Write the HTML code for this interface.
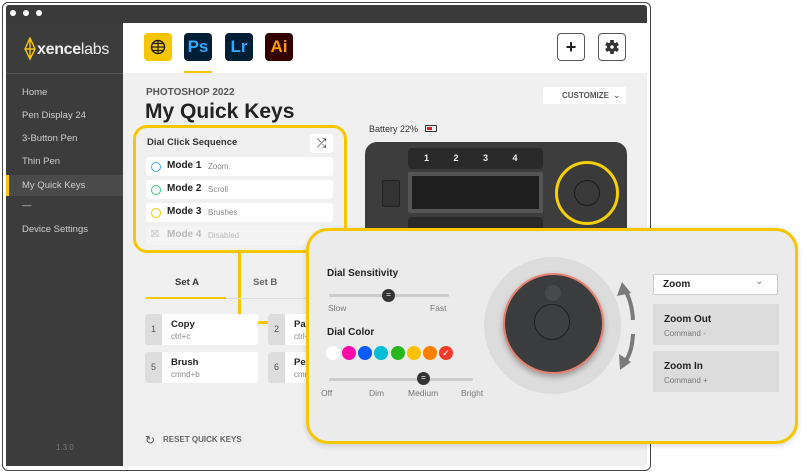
<!DOCTYPE html>
<html><head><meta charset="utf-8"><style>
*{margin:0;padding:0;box-sizing:border-box}
body{width:811px;height:474px;background:#fff;font-family:"Liberation Sans","DejaVu Sans",sans-serif;position:relative;overflow:hidden;color:#222}
.a{position:absolute}
.win{left:2px;top:2px;width:649px;height:469px;border:1px solid #444;border-radius:6px;background:#fff}
.t{position:absolute;white-space:nowrap}
.nav{left:22px;font-size:9.5px;color:#cfcfcf}
.ic{width:28px;height:28px;border-radius:4px;font-size:17px;font-weight:bold;text-align:center;line-height:28px}
.row{left:146px;width:187px;height:19px;background:#fff;border-radius:3px}
.row .c{position:absolute;left:5px;top:5px;width:10px;height:10px;border-radius:50%;border:1.5px solid}
.row b{position:absolute;left:21px;top:3px;font-size:10px}
.row span{position:absolute;left:62px;top:5px;font-size:8px;color:#888}
.key{width:113px;height:31px;background:#fff;border-radius:3px;overflow:hidden}
.key .n{position:absolute;left:0;top:0;width:17px;height:31px;background:#ddd;font-size:9px;color:#555;text-align:center;line-height:31px}
.key b{position:absolute;left:26px;top:5px;font-size:9.5px}
.key span{position:absolute;left:26px;top:18px;font-size:8px;color:#888}
.sw{width:14px;height:14px;border-radius:50%;top:346px}
</style></head><body>
<div class="a win"></div>
<div class="a" style="left:6px;top:5px;width:641px;height:18px;background:#3a3a3a;border-radius:3px 3px 0 0"></div>
<div class="a" style="left:10px;top:10px;width:6px;height:6px;border-radius:50%;background:#fff"></div>
<div class="a" style="left:23px;top:10px;width:6px;height:6px;border-radius:50%;background:#fff"></div>
<div class="a" style="left:36px;top:10px;width:6px;height:6px;border-radius:50%;background:#fff"></div>
<!-- sidebar -->
<div class="a" style="left:6px;top:23px;width:117px;height:443px;background:#3c3c3c"></div>
<div class="a" style="left:6px;top:73px;width:117px;height:1px;background:#555"></div>
<svg class="a" style="left:23px;top:37px" width="14" height="24" viewBox="0 0 14 24"><path d="M7 1 L12 12 L7 22 L2 12 Z M7 1 L7 22 M2 12 L12 12" fill="none" stroke="#f7c600" stroke-width="1.4"/></svg>
<div class="t" style="left:37px;top:41px;font-size:16px;color:#eee;letter-spacing:-0.3px"><b>xence</b>labs</div>
<div class="t nav" style="top:87px">Home</div>
<div class="t nav" style="top:110px">Pen Display 24</div>
<div class="t nav" style="top:133px">3-Button Pen</div>
<div class="t nav" style="top:156px">Thin Pen</div>
<div class="a" style="left:6px;top:175px;width:117px;height:21px;background:#4a4a4a"></div>
<div class="a" style="left:6px;top:175px;width:3px;height:21px;background:#f7c600"></div>
<div class="t nav" style="top:180px">My Quick Keys</div>
<div class="t nav" style="top:200px">—</div>
<div class="t nav" style="top:224px">Device Settings</div>
<div class="t" style="left:56px;top:443px;font-size:8px;color:#777">1.3.0</div>
<!-- top bar -->
<div class="a" style="left:123px;top:73px;width:524px;height:393px;background:#f0f0f0"></div>
<div class="a ic" style="left:144px;top:33px;background:#f7c600"><svg width="28" height="28" viewBox="0 0 28 28"><circle cx="14" cy="14" r="6.5" fill="none" stroke="#222" stroke-width="1.5"/><path d="M7.5 14h13M14 7.5v13M9 10.5h10M9 17.5h10" stroke="#222" stroke-width="1.2"/></svg></div>
<div class="a ic" style="left:184px;top:33px;background:#001e36;color:#31a8ff">Ps</div>
<div class="a" style="left:184px;top:71px;width:28px;height:2px;background:#f7c600"></div>
<div class="a ic" style="left:225px;top:33px;background:#001e36;color:#31a8ff">Lr</div>
<div class="a ic" style="left:265px;top:33px;background:#330000;color:#ff9a00">Ai</div>
<div class="a" style="left:557px;top:33px;width:28px;height:28px;border:1px solid #555;border-radius:4px;text-align:center;line-height:26px;font-size:18px;font-weight:bold">+</div>
<div class="a" style="left:598px;top:33px;width:28px;height:28px;border:1px solid #555;border-radius:4px"><svg width="26" height="26" viewBox="0 0 26 26"><g transform="translate(13 13)" fill="#333"><circle r="5"/><rect x="-1.8" y="-7" width="3.6" height="14"/><rect x="-1.8" y="-7" width="3.6" height="14" transform="rotate(60)"/><rect x="-1.8" y="-7" width="3.6" height="14" transform="rotate(120)"/><circle r="1.8" fill="#fff"/></g></svg></div>
<!-- content -->
<div class="t" style="left:146px;top:87px;font-size:10px;font-weight:bold;color:#555">PHOTOSHOP 2022</div>
<div class="t" style="left:145px;top:100px;font-size:21px;font-weight:bold;color:#222">My Quick Keys</div>
<div class="a" style="left:543px;top:87px;width:83px;height:17px;background:#fff;border-radius:2px"></div>
<div class="t" style="left:562px;top:91px;font-size:8px;font-weight:bold;color:#555">CUSTOMIZE &nbsp;⌄</div>
<!-- dial sequence -->
<div class="a" style="left:133px;top:125px;width:214px;height:128px;border:3px solid #f7c600;border-radius:14px"></div>
<div class="t" style="left:147px;top:137px;font-size:9.5px;font-weight:bold;color:#333">Dial Click Sequence</div>
<div class="a" style="left:310px;top:134px;width:23px;height:19px;background:#fff;border-radius:3px;text-align:center;font-size:12px;line-height:19px">⤮</div>
<div class="a row" style="top:157px"><i class="c" style="border-color:#3ab0f0"></i><b>Mode 1</b><span>Zoom</span></div>
<div class="a row" style="top:180px"><i class="c" style="border-color:#2ecc71"></i><b>Mode 2</b><span>Scroll</span></div>
<div class="a row" style="top:203px"><i class="c" style="border-color:#f7c600"></i><b>Mode 3</b><span>Brushes</span></div>
<div class="a row" style="top:226px;background:#f4f4f4"><span style="left:5px;top:3px;font-size:10px;color:#bbb">⛝</span><b style="color:#bbb">Mode 4</b><span style="color:#bbb">Disabled</span></div>
<!-- connector -->
<div class="a" style="left:238px;top:252px;width:3px;height:72px;background:#f7c600"></div>
<div class="a" style="left:238px;top:321px;width:68px;height:3px;background:#f7c600"></div>
<div class="a" style="left:299px;top:316px;width:13px;height:13px;border-radius:50%;background:#f7c600"></div>
<!-- tabs -->
<div class="t" style="left:175px;top:277px;font-size:9.5px;font-weight:bold;color:#333">Set A</div>
<div class="t" style="left:253px;top:277px;font-size:9.5px;font-weight:bold;color:#666">Set B</div>
<div class="a" style="left:146px;top:298px;width:160px;height:1px;background:#ddd"></div>
<div class="a" style="left:146px;top:297px;width:80px;height:2px;background:#f7c600"></div>
<div class="a key" style="left:145px;top:314px"><div class="n">1</div><b>Copy</b><span>ctrl+c</span></div>
<div class="a key" style="left:268px;top:314px"><div class="n">2</div><b>Paste</b><span>ctrl+v</span></div>
<div class="a key" style="left:145px;top:352px"><div class="n">5</div><b>Brush</b><span>cmnd+b</span></div>
<div class="a key" style="left:268px;top:352px"><div class="n">6</div><b>Pen</b><span>cmnd+p</span></div>
<div class="t" style="left:145px;top:433px;font-size:12px;color:#555">↻</div>
<div class="t" style="left:163px;top:435px;font-size:8px;font-weight:bold;color:#666">RESET QUICK KEYS</div>
<!-- device -->
<div class="t" style="left:369px;top:124px;font-size:9px;color:#333">Battery 22%</div>
<div class="a" style="left:425px;top:125px;width:12px;height:7px;border:1px solid #333;border-radius:1px"><div style="width:5px;height:3px;margin:1px;background:#e02020"></div></div>
<div class="a" style="left:365px;top:142px;width:262px;height:140px;background:#3d3d3d;border-radius:12px"></div>
<div class="a" style="left:408px;top:148px;width:135px;height:21px;background:#2a2a2a;border-radius:4px"></div>
<div class="t" style="left:424px;top:153px;font-size:9px;font-weight:bold;color:#eee;word-spacing:22px">1 2 3 4</div>
<div class="a" style="left:408px;top:172px;width:135px;height:41px;background:#555;border-radius:2px"><div style="margin:4px;height:33px;background:#1e1e1e"></div></div>
<div class="a" style="left:408px;top:217px;width:135px;height:20px;background:#2a2a2a;border-radius:4px"></div>
<div class="a" style="left:382px;top:180px;width:18px;height:27px;border:1px solid #222;background:#333;border-radius:2px"></div>
<div class="a" style="left:555px;top:161px;width:64px;height:64px;border:3px solid #f7d000;border-radius:50%;background:#3a3a3a"></div>
<div class="a" style="left:574px;top:180px;width:26px;height:26px;border:1px solid #1a1a1a;border-radius:50%"></div>
<!-- popup -->
<div class="a" style="left:306px;top:228px;width:492px;height:216px;background:#ebebeb;border:3px solid #f7c600;border-radius:22px;box-shadow:0 2px 6px rgba(0,0,0,.15)"></div>
<div class="t" style="left:327px;top:268px;font-size:10px;font-weight:bold">Dial Sensitivity</div>
<div class="a" style="left:329px;top:294px;width:120px;height:3px;background:#ccc;border-radius:2px"></div>
<div class="a" style="left:382px;top:289px;width:13px;height:13px;border-radius:50%;background:#333;color:#fff;font-size:8px;text-align:center;line-height:12px">=</div>
<div class="t" style="left:328px;top:303px;font-size:8.5px;color:#777">Slow</div>
<div class="t" style="left:430px;top:303px;font-size:8.5px;color:#777">Fast</div>
<div class="t" style="left:327px;top:327px;font-size:10px;font-weight:bold">Dial Color</div>
<div class="a sw" style="left:326px;background:#fff"></div>
<div class="a sw" style="left:342px;background:#ff0aa8"></div>
<div class="a sw" style="left:358px;background:#0a5cff"></div>
<div class="a sw" style="left:374px;background:#00bcd4"></div>
<div class="a sw" style="left:391px;background:#29b81c"></div>
<div class="a sw" style="left:407px;background:#ffc000"></div>
<div class="a sw" style="left:423px;background:#ff7f00"></div>
<div class="a sw" style="left:439px;background:#f03c2e;color:#fff;font-size:9px;text-align:center;line-height:14px">✓</div>
<div class="a" style="left:329px;top:378px;width:144px;height:3px;background:#ccc;border-radius:2px"></div>
<div class="a" style="left:417px;top:372px;width:13px;height:13px;border-radius:50%;background:#333;color:#fff;font-size:8px;text-align:center;line-height:12px">=</div>
<div class="t" style="left:321px;top:388px;font-size:8.5px;color:#777">Off</div>
<div class="t" style="left:369px;top:388px;font-size:8.5px;color:#777">Dim</div>
<div class="t" style="left:408px;top:388px;font-size:8.5px;color:#777">Medium</div>
<div class="t" style="left:461px;top:388px;font-size:8.5px;color:#777">Bright</div>
<div class="a" style="left:484px;top:257px;width:137px;height:137px;border-radius:50%;background:#dcdcdc"></div>
<div class="a" style="left:503px;top:273px;width:101px;height:101px;border-radius:50%;background:#3a3c3e;border:2px solid #e8806e;box-shadow:0 3px 6px rgba(0,0,0,.3)"></div>
<div class="a" style="left:545px;top:285px;width:16px;height:16px;border-radius:50%;background:#47494b"></div>
<div class="a" style="left:534px;top:304px;width:36px;height:36px;border-radius:50%;border:1px solid #1e1e1e;background:#3d3f41"></div>
<svg class="a" style="left:612px;top:280px" width="28" height="95" viewBox="0 0 28 95"><path d="M13 10 Q20 22 21 40" fill="none" stroke="#7a7a7a" stroke-width="4"/><path d="M5 16 L10 2 L19 13 Z" fill="#7a7a7a"/><path d="M21 54 Q20 72 14 80" fill="none" stroke="#7a7a7a" stroke-width="4"/><path d="M7 74 L8 90 L19 82 Z" fill="#7a7a7a"/></svg>
<div class="a" style="left:653px;top:274px;width:125px;height:21px;background:#fff;border:1px solid #ccc;border-radius:2px"></div>
<div class="t" style="left:663px;top:279px;font-size:10px;font-weight:bold">Zoom</div>
<div class="t" style="left:755px;top:276px;font-size:10px;color:#777">⌄</div>
<div class="a" style="left:653px;top:304px;width:126px;height:41px;background:#dcdcdc;border-radius:2px"></div>
<div class="t" style="left:664px;top:314px;font-size:10px;font-weight:bold">Zoom Out</div>
<div class="t" style="left:664px;top:329px;font-size:8px;color:#777">Command -</div>
<div class="a" style="left:653px;top:351px;width:126px;height:41px;background:#dcdcdc;border-radius:2px"></div>
<div class="t" style="left:664px;top:361px;font-size:10px;font-weight:bold">Zoom In</div>
<div class="t" style="left:664px;top:376px;font-size:8px;color:#777">Command +</div>
</body></html>
